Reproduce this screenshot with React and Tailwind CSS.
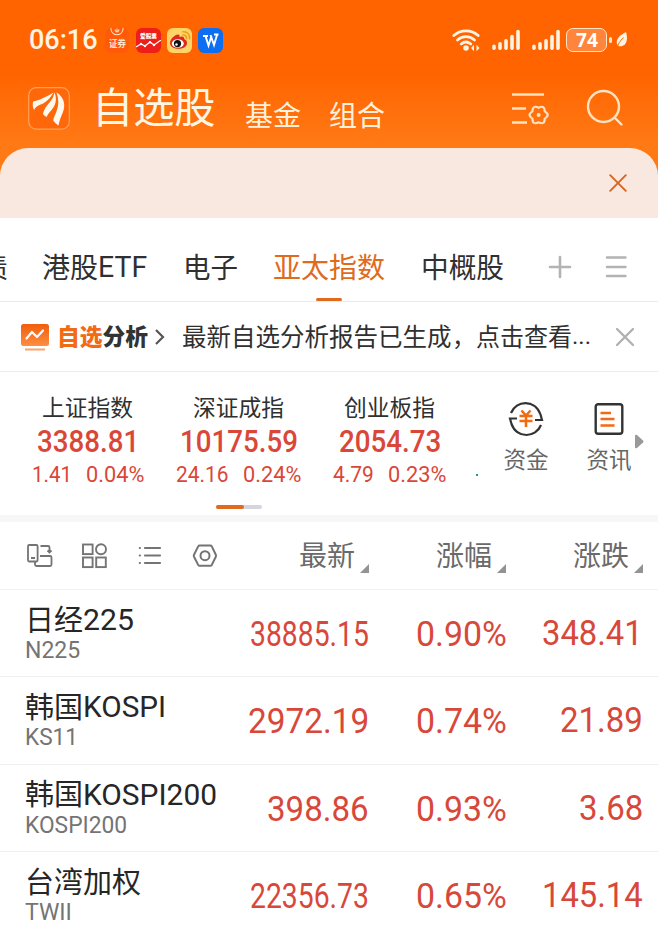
import React, { useLayoutEffect, useRef, useState } from 'react';

const indices = [
  { name: '上证指数', value: '3388.81', vw: 102, change: '1.41', cw: 40, percent: '0.04%', pw: 58 },
  { name: '深证成指', value: '10175.59', vw: 118, change: '24.16', cw: 53, percent: '0.24%', pw: 58 },
  { name: '创业板指', value: '2054.73', vw: 102, change: '4.79', cw: 41, percent: '0.23%', pw: 58 },
];

const stocks = [
  { cn: '日经', latin: '225', lw: 51, code: 'N225', codeW: 55, price: '38885.15', priceW: 119, percent: '0.90%', change: '348.41', changeW: 101 },
  { cn: '韩国', latin: 'KOSPI', lw: 83, code: 'KS11', codeW: 53, price: '2972.19', priceW: 121, percent: '0.74%', change: '21.89', changeW: 83 },
  { cn: '韩国', latin: 'KOSPI200', lw: 134, code: 'KOSPI200', codeW: 102, price: '398.86', priceW: 102, percent: '0.93%', change: '3.68', changeW: 64 },
  { cn: '台湾加权', latin: '', lw: 0, code: 'TWII', codeW: 47, price: '22356.73', priceW: 119, percent: '0.65%', change: '145.14', changeW: 101 },
];

// Squeezes or stretches one line of text to the given width
function Fit({ w, className = '', children }) {
  const ref = useRef(null);
  const [scale, setScale] = useState(1);

  useLayoutEffect(() => {
    setScale(w / ref.current.offsetWidth);
  }, [w, children]);

  return (
    <span className={`block shrink-0 whitespace-nowrap ${className}`} style={{ width: w }}>
      <span ref={ref} className="inline-block origin-left" style={{ transform: `scaleX(${scale})` }}>
        {children}
      </span>
    </span>
  );
}

function Signal({ className }) {
  return (
    <svg className={`w-[28px] h-[22px] shrink-0 ${className}`} viewBox="0 0 28 22" stroke="#fff3e2" strokeWidth="3.6" strokeLinecap="round">
      <path d="M2 19.300v-2M8 19.300v-4.500M14 19.300v-7.500M20 19.300V7.500M26 19.300V2.500" />
    </svg>
  );
}

function StatusBar() {
  return (
    <div className="h-[80px] flex items-center pl-[29px] text-[#fff3e2]">
      <Fit w={69} className="text-[27px] leading-[30px] font-[Roboto] font-medium">06:16</Fit>

      {/* Notification icons */}
      <div className="ml-[7px] w-[24px] h-[25px] rounded-md bg-[#ff5a0a] flex flex-col items-center overflow-hidden">
        <svg className="w-[14px] h-[9px] shrink-0" viewBox="0 0 14 9" fill="none" stroke="#ffe0bd" strokeWidth="1.1">
          <path d="M.8 0c.5 9 11.900 9 12.400 0M4.800 1.500l1.500 2.500M9.200 1.500L7.700 4M7 .5v4" />
        </svg>
        <Fit w={17} className="text-[9px] leading-[13px] font-bold text-[#ffe6c8]">证券</Fit>
      </div>
      <div className="ml-[7px] w-[25px] h-[25px] rounded-[6px] bg-[#ee1f1b] flex flex-col items-center overflow-hidden">
        <Fit w={17} className="mt-[3px] text-[6px] leading-[9px] font-black text-white">爱股票</Fit>
        <svg className="w-[25px] h-[12px] shrink-0" viewBox="0 0 25 12" fill="none" stroke="#fff" strokeWidth="1.2">
          <path d="M0 7l5-3 4 2 5-4 4 3 7-5" />
          <g fill="#fff" stroke="none">
            <circle cx="5" cy="4" r="1.2" />
            <circle cx="9" cy="6" r="1.2" />
            <circle cx="14" cy="2.200" r="1.2" />
            <circle cx="18" cy="5" r="1.2" />
          </g>
        </svg>
      </div>
      <svg className="ml-[6px] w-[25px] h-[25px] shrink-0" viewBox="0 0 25 25">
        <rect width="25" height="25" rx="6" fill="#fdd567" />
        <path d="M3 15c0-4 5-8.500 8-8.500 1.500 0 1.800 1.200 1.500 2.500 2.500-1 5-.7 4.800 2.200 1.800.6 2.700 1.800 2.700 3.800 0 4-4.500 5.800-8.500 5.800S3 19 3 15z" fill="#e0291e" />
        <ellipse cx="10.800" cy="15.500" rx="6" ry="4.300" fill="#fff" />
        <circle cx="10.500" cy="15.600" r="3.600" fill="#111" />
        <circle cx="9.500" cy="16.500" r="1.200" fill="#fff" />
        <path d="M16 7c2.300-.3 3.800 1.400 3.500 3.500M16 3.800c4.300-.4 7 2.700 6.500 7" fill="none" stroke="#f29b1f" strokeWidth="1.600" strokeLinecap="round" />
      </svg>
      <svg className="ml-[6px] w-[25px] h-[25px] shrink-0" viewBox="0 0 25 25">
        <rect width="25" height="25" rx="6" fill="#0d6ef2" />
        <path d="M5 8h5M16 6.500h4.500M7.500 8l3 9.500 3-9.500M12.500 7l3.500 10 3-10" fill="none" stroke="#fff" strokeWidth="1.900" />
      </svg>

      {/* System icons */}
      <svg className="ml-[229px] w-[28px] h-[24px] shrink-0" viewBox="0 0 28 24" fill="none" stroke="#fff3e2" strokeWidth="2.700" strokeLinecap="round">
        <path d="M1.800 7.500c7-6.300 17.400-6.300 24.400 0M5.500 12c5-4.500 12-4.500 17 0M9.200 16c3-2.500 6.600-2.500 9.600 0" />
        <circle cx="14" cy="20" r="2.800" fill="#fff3e2" stroke="none" />
        <path d="M19 20l3-3.200v6.400zM27.500 20l-3-3.200v6.400z" fill="#fff3e2" stroke="none" />
      </svg>
      <Signal className="ml-[12px]" />
      <Signal className="ml-[12px]" />
      <div className="ml-[6px] w-[41px] h-[24px] rounded-[7px] border-[1.500px] border-[#ffe4c6] bg-[#ff843c] flex items-center justify-center">
        <Fit w={22} className="text-[20px] leading-[22px] font-['Open_Sans'] font-bold text-white">74</Fit>
      </div>
      <span className="ml-[2px] w-[2.500px] h-[6px] rounded-sm bg-[#ffe4c6]" />
      <svg className="ml-[3px] w-[14px] h-[18px] shrink-0" viewBox="0 0 14 18">
        <path d="M11 1c1.800 5.500 1.500 13-4.500 14.200-2 .4-3.300-.1-3.700-.7C-.6 9 4.500 4.500 11 1z" fill="#fff3e2" />
        <path d="M2 17c1-4 3-7 6.500-10.500" fill="none" stroke="#ff6500" strokeWidth="1" />
      </svg>
    </div>
  );
}

function Header() {
  return (
    <div className="h-[68px] flex items-start pl-[28px]">
      <svg className="mt-[7px] w-[42px] h-[43px] shrink-0" viewBox="0 0 42 43">
        <rect x=".7" y=".7" width="40.600" height="41.400" rx="7.500" fill="#ff680a" stroke="#ffa158" strokeWidth="1.200" />
        <g fill="#fff8ec">
          <path d="M5 14.500C11 13.500 18 10 25.500 5.500c-2.500 4.500-6 8.700-10 10.700-4 2-7 2.300-9.500 6.800-1.200-2.500-1.500-5.500-1-8.500z" />
          <path d="M26.500 5.500c2.200 5.500 1.800 11-1.500 15.500-2.200 3-4.800 5.500-6.500 9-1.300-.8-2.600-1.800-3.500-3 1.300-5.500 3.700-8 6.500-11.500 2.500-3 4.300-6 5-10z" />
          <path d="M28.500 5.500c7.500 4.500 9.300 12 6.500 19.500-1.800 4.500-3.700 8.500-4.500 13.500-2-1.300-3.900-3-5.200-5 .2-3 1.800-5.500 3-8.500 2.600-6.500 2.800-13 .2-19.500z" />
        </g>
      </svg>
      <Fit w={124} className="ml-[22px] mt-[-5px] text-[41.500px] leading-[60px] text-[#fff6e4]">自选股</Fit>
      <Fit w={56} className="ml-[29px] mt-[14px] text-[28px] leading-[40px] text-[#fff1dc]">基金</Fit>
      <Fit w={56} className="ml-[28px] mt-[14px] text-[28px] leading-[40px] text-[#fff1dc]">组合</Fit>
      <svg className="ml-[127px] mt-[12px] w-[38px] h-[34px] shrink-0" viewBox="0 0 38 34" fill="none" stroke="#ffe2c0" strokeWidth="2.600">
        <path d="M0 2.500h32M0 16.500h14M0 30.500h15" />
        <path strokeWidth="2.200" strokeLinejoin="round" d="M32.800 19.400Q38.600 23 32.800 26.600Q32.600 33.400 26.600 30.200Q20.600 33.400 20.400 26.600Q14.600 23 20.400 19.400Q20.600 12.600 26.600 15.800Q32.600 12.600 32.800 19.400z" />
        <circle cx="26.600" cy="23" r="2" fill="#ffe2c0" stroke="none" />
      </svg>
      <svg className="ml-[36px] mt-[9px] w-[38px] h-[38px] shrink-0" viewBox="0 0 38 38" fill="none" stroke="#ffe2c0" strokeWidth="2.400" strokeLinecap="round">
        <circle cx="17.500" cy="17.500" r="15.500" />
        <path d="M28.500 28.500l7 7" />
      </svg>
    </div>
  );
}

function Tabs() {
  return (
    <div className="h-[84px] flex border-b border-[#ececec] text-[28px] leading-[40px] text-[#303030] overflow-hidden pt-[28px]">
      <span className="w-[8px] shrink-0 flex justify-end">债</span>
      <div className="ml-[34px] flex">
        <Fit w={56}>港股</Fit>
        <Fit w={49} className="mt-[1px] text-[29px] font-[Roboto]">ETF</Fit>
      </div>
      <Fit w={55} className="ml-[36px]">电子</Fit>
      <div className="ml-[35px] flex flex-col items-center">
        <Fit w={112} className="text-[#e06a1d]">亚太指数</Fit>
        <span className="mt-[12px] w-[26px] h-[3px] rounded-full bg-[#e06a1d]" />
      </div>
      <Fit w={83} className="ml-[36px]">中概股</Fit>
      <svg className="ml-[44px] mt-[9px] w-[24px] h-[24px] shrink-0" viewBox="0 0 24 24" stroke="#b3b3b3" strokeWidth="2.600" strokeLinecap="round">
        <path d="M2 12h20M12 2v20" />
      </svg>
      <svg className="ml-[32px] mt-[9px] w-[24px] h-[24px] shrink-0" viewBox="0 0 24 24" stroke="#b3b3b3" strokeWidth="2.400" strokeLinecap="round">
        <path d="M3 2.500h18.500M3 12h18.500M3 21h18.500" />
      </svg>
    </div>
  );
}

function AnalysisBar() {
  return (
    <div className="h-[70px] flex items-center border-b border-[#ececec] pl-[20px]">
      <svg className="w-[30px] h-[28px] shrink-0" viewBox="0 0 30 28" fill="none">
        <defs>
          <linearGradient id="screen" x1="0" y1="0" x2="0" y2="1">
            <stop offset="0" stopColor="#f15c0c" />
            <stop offset="1" stopColor="#fd8f43" />
          </linearGradient>
        </defs>
        <rect x="1" y="1" width="28" height="22" rx="2.500" fill="url(#screen)" />
        <path d="M6.500 15.500l5.500-6.500 5 5 6-6.500" stroke="#fff" strokeWidth="2.200" strokeLinecap="round" strokeLinejoin="round" />
        <path d="M5 26.500h20" stroke="#fba468" strokeWidth="2" />
      </svg>
      <Fit w={91} className="ml-[7px] mb-[3px] text-[23px] leading-[32px] font-black text-[#333]">
        <span className="text-[#f36a14]">自选</span>分析
      </Fit>
      <svg className="ml-[6px] w-[11px] h-[18px] shrink-0" viewBox="0 0 11 18" fill="none" stroke="#555" strokeWidth="2.200">
        <path d="M2 2l7 7-7 7" />
      </svg>
      <div className="ml-[17px] mb-[2px] flex text-[24.500px] leading-[36px] text-[#303030]">
        <Fit w={270}>最新自选分析报告已生成</Fit>
        <Fit w={24}>，</Fit>
        <Fit w={96}>点击查看</Fit>
        <span className="text-[24px] font-[Roboto]">...</span>
      </div>
      <svg className="ml-auto mr-[23px] w-[20px] h-[20px] shrink-0" viewBox="0 0 20 20" stroke="#b0b0b0" strokeWidth="2.300" strokeLinecap="round">
        <path d="M2 2l16 16M18 2L2 18" />
      </svg>
    </div>
  );
}

function IndexPanel() {
  return (
    <div className="relative h-[143px] flex">
      <div className="ml-[12px] flex">
        {indices.map((item) => (
          <div key={item.name} className="w-[151px] flex flex-col items-center pt-[17px]">
            <Fit w={91} className="text-[22.500px] leading-[34px] text-[#303030]">{item.name}</Fit>
            <Fit w={item.vw} className="mt-[1px] text-[31px] leading-[36px] font-[Roboto] font-medium text-[#da4738]">{item.value}</Fit>
            <div className="mt-[-1px] flex gap-[14px] text-[22.500px] leading-[30px] font-[Roboto] text-[#da4738]">
              <Fit w={item.cw}>{item.change}</Fit>
              <Fit w={item.pw}>{item.percent}</Fit>
            </div>
          </div>
        ))}
      </div>
      <span className="ml-[11px] mt-[102px] w-[2px] h-[2px] bg-[#2e9e62]" />
      <div className="ml-[23px] w-[50px] flex flex-col items-center pt-[29px]">
        <svg className="w-[36px] h-[36px]" viewBox="0 0 36 36" fill="none" stroke="#333" strokeWidth="2.200">
          <path d="M3 12C8 -1 27 -2 32.500 13.500L34 19h-7M33 24C28 37 9 38 3.500 23L2 17.500h7" />
          <path d="M13.500 9.500l4.500 5 4.500-5M11.500 15h13M11.500 20h13M18 14.500v11.500" stroke="#f06c12" strokeWidth="2.600" />
        </svg>
        <Fit w={45} className="mt-[4px] text-[22.500px] leading-[34px] text-[#666]">资金</Fit>
      </div>
      <div className="ml-[33px] w-[50px] flex flex-col items-center pt-[29px]">
        <svg className="w-[36px] h-[36px]" viewBox="0 0 36 36" fill="none" stroke="#333" strokeWidth="2.400">
          <rect x="4.700" y="3.200" width="26.600" height="29.600" rx="2.500" />
          <path d="M9.500 12h10.500M9.500 18h14M9.500 24.500h14" stroke="#f06c12" strokeWidth="2.600" />
        </svg>
        <Fit w={45} className="mt-[4px] text-[22.500px] leading-[34px] text-[#666]">资讯</Fit>
      </div>
      <svg className="w-[10px] h-[15px] mt-[62px]" viewBox="0 0 10 15" fill="#999">
        <path d="M1 2q0-2 2-1l6 5.500q1 1 0 2L3 14q-2 1-2-1z" />
      </svg>
      {/* Pager */}
      <div className="absolute left-[216px] top-[133px] flex w-[46px] h-[4px] rounded-full bg-[#d3d6dc]">
        <span className="w-[28px] rounded-full bg-[#e06a1d]" />
      </div>
    </div>
  );
}

function SortHead({ label, className }) {
  return (
    <div className={`flex items-end ${className}`}>
      <Fit w={56} className="mb-[2px] text-[28px] leading-[40px] text-[#6a6a6a]">{label}</Fit>
      <svg className="ml-[5px] mb-[3px] w-[9px] h-[9px]" viewBox="0 0 9 9" fill="#939393">
        <path d="M9 0v9H0z" />
      </svg>
    </div>
  );
}

function TableHead() {
  return (
    <div className="h-[68px] flex items-start border-b border-[#f2f2f2] pl-[26px] pt-[12px]">
      <div className="flex pt-[9px]">
        <svg className="w-[27px] h-[26px]" viewBox="0 0 27 26" fill="none" stroke="#747474" strokeWidth="1.800">
          <rect x="2" y="2" width="9.600" height="16.500" rx="1.200" />
          <path d="M5 15h4M14.500 3h7.500q1.500 0 1.500 1.500V9M21.500 7.500l2 2 2-2M14 13h10q1.500 0 1.500 1.500v7q0 1.500-1.500 1.500H10.500Q9 23 9 21.500V19" />
        </svg>
        <svg className="ml-[28px] w-[27px] h-[26px]" viewBox="0 0 27 26" fill="none" stroke="#747474" strokeWidth="1.900">
          <rect x="2" y="1.500" width="9.600" height="9.600" />
          <circle cx="20" cy="6.300" r="5" />
          <rect x="2" y="14.500" width="9.600" height="9.600" />
          <rect x="15.200" y="14.500" width="9.600" height="9.600" />
        </svg>
        <svg className="ml-[29px] w-[26px] h-[26px]" viewBox="0 0 26 26" fill="none" stroke="#747474" strokeWidth="2.200" strokeLinecap="round">
          <path d="M8 5h15M8 12.500h15M8 20h15M2.800 5h.1M2.800 12.500h.1M2.800 20h.1" />
        </svg>
        <svg className="ml-[28px] w-[28px] h-[26px]" viewBox="0 0 28 26" fill="none" stroke="#747474" strokeWidth="2" strokeLinejoin="round">
          <path d="M8.700 2.500h10.600q1 0 1.500.9l4 8.300q.5 1 0 2l-4 8.200q-.5.900-1.500.9H8.700q-1 0-1.500-.9L3 13.700q-.5-1 0-2l4.200-8.300q.5-.9 1.500-.9z" />
          <circle cx="14" cy="12.700" r="4.500" />
        </svg>
      </div>
      <SortHead label="最新" className="ml-[80px]" />
      <SortHead label="涨幅" className="ml-[67px]" />
      <SortHead label="涨跌" className="ml-[67px]" />
    </div>
  );
}

function StockRow({ item }) {
  return (
    <div className="h-[87.400px] flex border-b border-[#f0f0f0] pl-[25px] font-[Roboto]">
      <div className="w-[205px] pt-[10px]">
        <div className="flex h-[37px] items-center text-[29px] leading-[34px] text-[#262626]">
          <Fit w={item.cn.length * 29} className="mb-[2px] font-['Noto_Sans_CJK_SC',sans-serif]">{item.cn}</Fit>
          {item.latin && <Fit w={item.lw} className="mt-[3px]">{item.latin}</Fit>}
        </div>
        <Fit w={item.codeW} className="text-[23px] leading-[28px] text-[#747474]">{item.code}</Fit>
      </div>
      <div className="w-[138.500px] pt-[25px] flex justify-end text-[35px] leading-[40px] text-[#d8483a]">
        <Fit w={item.priceW}>{item.price}</Fit>
      </div>
      <div className="w-[138px] pt-[25px] flex justify-end text-[35px] leading-[40px] text-[#d8483a]">
        <Fit w={91}>{item.percent}</Fit>
      </div>
      <div className="w-[136px] pt-[24px] flex justify-end text-[35px] leading-[40px] text-[#d8483a]">
        <Fit w={item.changeW}>{item.change}</Fit>
      </div>
    </div>
  );
}

export default function App() {
  return (
    <div className="w-[658px] h-[934px] overflow-hidden bg-white font-['Noto_Sans_CJK_SC',sans-serif]">
      <div className="bg-linear-to-b from-[#ff6400] from-33% to-[#ff7914] to-66% h-[218px]">
        <StatusBar />
        <Header />
        <div className="h-[70px] rounded-t-[28px] bg-[#f9e8df] flex items-center justify-end pr-[31px]">
          <svg className="w-[18px] h-[18px]" viewBox="0 0 18 18" stroke="#d9641e" strokeWidth="1.900" strokeLinecap="round">
            <path d="M1.200 1.200l15.600 15.600M16.800 1.200L1.200 16.800" />
          </svg>
        </div>
      </div>
      <Tabs />
      <AnalysisBar />
      <IndexPanel />
      <div className="h-[7px] bg-[#f7f7f8]" />
      <TableHead />
      {stocks.map((item) => (
        <StockRow key={item.code} item={item} />
      ))}
    </div>
  );
}
